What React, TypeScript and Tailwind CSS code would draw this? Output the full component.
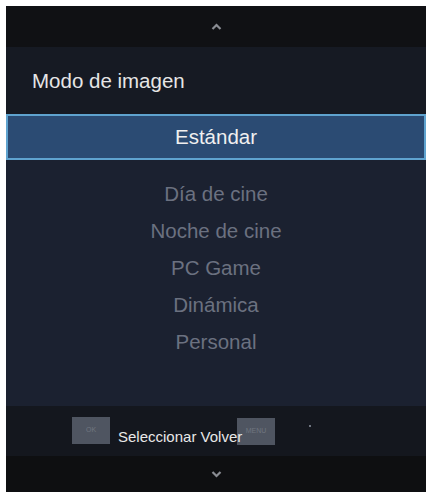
const modes = ["Día de cine", "Noche de cine", "PC Game", "Dinámica", "Personal"];

const Chevron: React.FC<{ down?: boolean }> = ({ down }) => (
  <svg width="11" height="8" viewBox="0 0 11 8" className={down ? "rotate-180" : ""}>
    <path d="M1.5 6 L5.5 2 L9.5 6" fill="none" stroke="#8a8d93" strokeWidth="2.2" />
  </svg>
);

export default function App() {
  return (
    <div className="w-[431px] h-[492px] bg-white pt-[6px] pl-[6px] pr-[5px] overflow-hidden">
      <div
        className="w-full h-full flex flex-col bg-[#1b2130]"
        style={{ fontFamily: '"Liberation Sans", Arial, sans-serif' }}
      >
        {/* top arrow */}
        <div className="h-[41px] bg-[#101114] flex items-center justify-center">
          <Chevron />
        </div>

        {/* title */}
        <div className="h-[67px] bg-[#161a23] flex items-center pl-[26px] pt-[2px]">
          <span className="text-[#e6e6e6] text-[20.5px]">Modo de imagen</span>
        </div>

        {/* selected */}
        <div className="h-[46px] border-2 border-[#5fa3cf] bg-[#2b4b73] flex items-center justify-center">
          <span className="text-[#f0f0f0] text-[20.5px]">Estándar</span>
        </div>

        {/* list */}
        <div className="flex flex-col items-center pt-[16px] h-[246px]">
          {modes.map((m) => (
            <div key={m} className="h-[37px] flex items-center text-[#6b7180] text-[20.5px]">
              {m}
            </div>
          ))}
        </div>

        {/* help bar */}
        <div className="h-[50px] bg-[#14171e] relative">
          <div className="absolute left-[66px] top-[11px] w-[38px] h-[27px] bg-[#4f5561] flex items-center justify-center text-[#6f7580] text-[7px]">
            OK
          </div>
          <div className="absolute left-[231px] top-[12px] w-[38px] h-[27px] bg-[#4f5561] flex items-center justify-center text-[#6f7580] text-[7px]">
            MENU
          </div>
          <span className="absolute left-[112px] top-[23px] text-[#e8e8e8] text-[15px] leading-none">
            Seleccionar Volver
          </span>
          <span className="absolute left-[303px] top-[19px] w-[2px] h-[2px] bg-[#6f7580]" />
        </div>

        {/* bottom arrow */}
        <div className="flex-1 bg-[#0e0f11] flex items-center justify-center">
          <Chevron down />
        </div>
      </div>
    </div>
  );
}
